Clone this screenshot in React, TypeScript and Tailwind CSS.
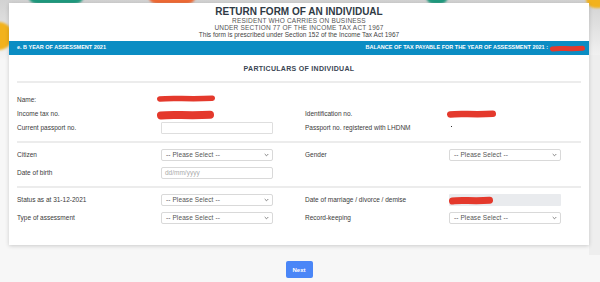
import React from "react";

function Scribble({ w, h, thick = 4 }: { w: number; h: number; thick?: number }) {
  const m = thick / 2;
  const mid = h / 2;
  return (
    <svg width={w} height={h} viewBox={`0 0 ${w} ${h}`} className="block">
      <path
        d={`M${m} ${mid + 0.5} C ${w * 0.25} ${mid - 1}, ${w * 0.55} ${mid + 1}, ${w - m} ${mid - 0.3}`}
        stroke="#e4392c"
        strokeWidth={thick}
        strokeLinecap="round"
        fill="none"
      />
    </svg>
  );
}

function Chevron() {
  return (
    <svg width="5" height="4" viewBox="0 0 5 4" className="block">
      <path d="M0.7 1 L2.5 2.8 L4.3 1" stroke="#666" strokeWidth="0.8" fill="none" />
    </svg>
  );
}

function Select() {
  return (
    <div className="flex h-[12px] w-[112px] items-center justify-between rounded-[2px] border border-[#d9d9d9] bg-white pl-[4px] pr-[3px]">
      <span className="text-[6.5px] leading-none tracking-[0.1px] text-[#555]">-- Please Select --</span>
      <Chevron />
    </div>
  );
}

function Label({ children }: { children: React.ReactNode }) {
  return <div className="w-[144px] shrink-0 text-[6.5px] leading-none text-[#3a3a3a]">{children}</div>;
}

function Half({ label, children }: { label?: string; children?: React.ReactNode }) {
  return (
    <div className="flex h-[12px] w-[288px] shrink-0 items-center">
      <Label>{label}</Label>
      {children}
    </div>
  );
}

function Divider() {
  return <div className="h-[2px] bg-[#ececec]" />;
}

export default function App() {
  return (
    <div className="relative h-[282px] w-[600px] overflow-hidden bg-[#f7f7f7] font-['Liberation_Sans',Arial,sans-serif]">
      {/* background decoration */}
      <div className="absolute inset-x-0 top-0 h-[60px] bg-gradient-to-b from-[#d2d2d2] to-[#f4f4f4]" />
      <div className="absolute left-[28px] top-[-14px] h-[18px] w-[56px] rounded-full bg-[#1f9a7e] blur-[1px]" />
      <div className="absolute left-[148px] top-[-14px] h-[18px] w-[48px] rounded-full bg-[#ef6a35] blur-[1px]" />
      <div className="absolute left-[426px] top-[-12px] h-[16px] w-[22px] rounded-full bg-[#1f9a7e] blur-[1px]" />
      <div className="absolute left-[586px] top-[-10px] h-[18px] w-[22px] rounded-full bg-[#f2b21c] blur-[1px]" />
      <div className="absolute left-[-14px] top-[22px] h-[28px] w-[26px] rounded-full bg-[#f2b21c] blur-[1px]" />
      <div className="absolute right-0 top-[55px] h-[200px] w-[11px] bg-[#eeeeee]" />

      <div className="relative flex flex-col pl-[9px] pt-[3px]">
        <div className="w-[580px] bg-white shadow-[0_1px_4px_rgba(0,0,0,0.18)]">
          {/* header */}
          <div className="flex flex-col items-center pt-[4px] pb-[3px] text-center">
            <div className="text-[10px] font-bold leading-[9px] text-[#2f3a45]">RETURN FORM OF AN INDIVIDUAL</div>
            <div className="mt-[1px] text-[6.5px] leading-[7px] tracking-[0.2px] text-[#555]">RESIDENT WHO CARRIES ON BUSINESS</div>
            <div className="text-[6.5px] leading-[7px] tracking-[0.2px] text-[#555]">UNDER SECTION 77 OF THE INCOME TAX ACT 1967</div>
            <div className="text-[6.5px] leading-[7px] text-[#444]">This form is prescribed under Section 152 of the Income Tax Act 1967</div>
          </div>
          <div className="flex h-[14px] items-center justify-between bg-[#0b8dc3] pl-[8px] pr-[4px]">
            <span className="text-[5.5px] font-bold leading-none text-white">e. B YEAR OF ASSESSMENT 2021</span>
            <div className="flex items-center">
              <span className="text-[5.5px] font-bold leading-none text-white">BALANCE OF TAX PAYABLE FOR THE YEAR OF ASSESSMENT 2021 :</span>
              <div className="ml-[2px]">
                <Scribble w={35} h={7} thick={5} />
              </div>
            </div>
          </div>

          {/* body */}
          <div className="px-[8px] pb-[21px]">
            <div className="pt-[10px] text-center text-[7px] font-bold leading-[8px] tracking-[0.3px] text-[#3b4654]">
              PARTICULARS OF INDIVIDUAL
            </div>
            <div className="mt-[8px]">
              <Divider />
            </div>

            <div className="flex flex-col gap-[2px] pt-[11px]">
              <div className="flex">
                <Half label="Name:">
                  <div className="-ml-[4px] -mt-[3px]">
                    <Scribble w={58} h={7} thick={5.5} />
                  </div>
                </Half>
              </div>
              <div className="flex">
                <Half label="Income tax no.">
                  <div className="-ml-[4px] mt-[1px]">
                    <Scribble w={57} h={10} thick={8} />
                  </div>
                </Half>
                <Half label="Identification no.">
                  <div className="-ml-[2px]">
                    <Scribble w={49} h={8} thick={6.5} />
                  </div>
                </Half>
              </div>
              <div className="flex">
                <Half label="Current passport no.">
                  <div className="h-[12px] w-[112px] rounded-[1px] border border-[#dedede] bg-white" />
                </Half>
                <Half label="Passport no. registered with LHDNM">
                  <div className="ml-[2px] -mt-[4px] h-[1px] w-[1px] bg-[#333]" />
                </Half>
              </div>
            </div>

            <div className="mt-[7px]">
              <Divider />
            </div>

            <div className="flex flex-col gap-[6px] pt-[6px]">
              <div className="flex">
                <Half label="Citizen">
                  <Select />
                </Half>
                <Half label="Gender">
                  <Select />
                </Half>
              </div>
              <div className="flex">
                <Half label="Date of birth">
                  <div className="flex h-[12px] w-[112px] items-center rounded-[2px] border border-[#d9d9d9] bg-white pl-[3px]">
                    <span className="text-[6.5px] leading-none text-[#aaa]">dd/mm/yyyy</span>
                  </div>
                </Half>
              </div>
            </div>

            <div className="mt-[7px]">
              <Divider />
            </div>

            <div className="flex flex-col gap-[6px] pt-[6px]">
              <div className="flex">
                <Half label="Status as at 31-12-2021">
                  <Select />
                </Half>
                <Half label="Date of marriage / divorce / demise">
                  <div className="flex h-[12px] w-[112px] items-center rounded-[1px] bg-[#e9ebee]">
                    <Scribble w={44} h={9} thick={7} />
                  </div>
                </Half>
              </div>
              <div className="flex">
                <Half label="Type of assessment">
                  <Select />
                </Half>
                <Half label="Record-keeping">
                  <Select />
                </Half>
              </div>
            </div>
          </div>
        </div>

        <div className="flex w-[580px] justify-center pt-[16px]">
          <button className="flex h-[17px] w-[27px] items-center justify-center rounded-[2px] bg-[#4a86f7] text-[6px] font-bold leading-none text-white">
            Next
          </button>
        </div>
      </div>
    </div>
  );
}
